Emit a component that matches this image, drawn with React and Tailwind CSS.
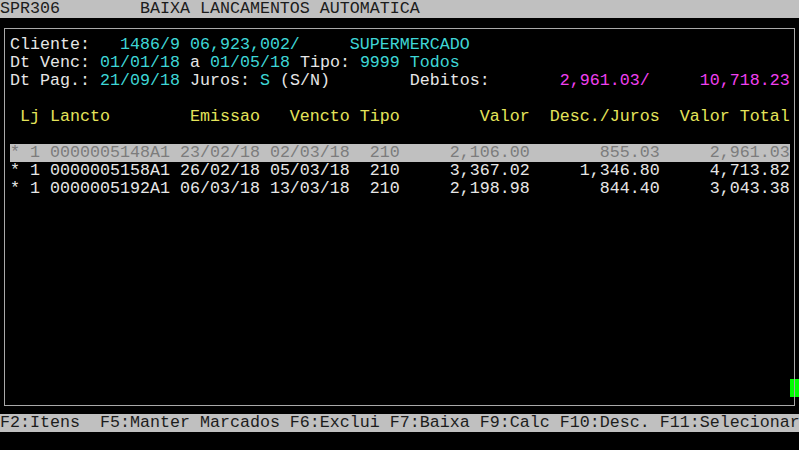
import React from 'react';

const W = 'text-[#e6e6e6]';
const C = 'text-[#3ed6d6]';
const Y = 'text-[#e4e45a]';
const M = 'text-[#f040f0]';

// each line is a list of [text, colour] pieces laid on an 80 x 24 character grid
const Line = ({ parts, className = '' }) => (
  <div className={`h-[18px] whitespace-pre ${className}`}>
    {parts.map(([t, c], i) => (
      <span key={i} className={c}>{t}</span>
    ))}
  </div>
);

const rows = [
  ['0000005148A1', '23/02/18', '02/03/18', '210', '2,106.00', '855.03', '2,961.03'],
  ['0000005158A1', '26/02/18', '05/03/18', '210', '3,367.02', '1,346.80', '4,713.82'],
  ['0000005192A1', '06/03/18', '13/03/18', '210', '2,198.98', '844.40', '3,043.38'],
];

const rowText = (r) =>
  `* 1 ${r[0]} ${r[1]} ${r[2]}  ${r[3]}     ${r[4].padStart(8)}     ${r[5].padStart(8)}     ${r[6].padStart(8)}`;

export default function App() {
  return (
    <div
      className="w-[799px] h-[450px] overflow-hidden bg-black text-[16.667px] leading-[18px]"
      style={{ fontFamily: '"Liberation Mono", "Courier New", monospace' }}
    >
      {/* barra de titulo */}
      <Line
        className="bg-[#c0c0c0] text-[#1c1c1c]"
        parts={[['SPR306        BAIXA LANCAMENTOS AUTOMATICA', '']]}
      />

      <div className="h-[396px] pt-[10px] pl-[4px]">
        <div className="relative w-[791px] h-[378px] border border-[#a9a9a9] pt-[7px] pl-[5px]">
          <Line
            parts={[
              ['Cliente:   ', W],
              ['1486/9 06,923,002/', C],
              ['     ', W],
              ['SUPERMERCADO', C],
            ]}
          />
          <Line
            parts={[
              ['Dt Venc: ', W],
              ['01/01/18', C],
              [' a ', W],
              ['01/05/18', C],
              [' Tipo: ', W],
              ['9999 Todos', C],
            ]}
          />
          <Line
            parts={[
              ['Dt Pag.: ', W],
              ['21/09/18', C],
              [' Juros: ', W],
              ['S', C],
              [' (S/N)        Debitos:       ', W],
              ['2,961.03/     10,718.23', M],
            ]}
          />
          <Line parts={[['', W]]} />
          <Line
            parts={[[' Lj Lancto        Emissao   Vencto Tipo        Valor  Desc./Juros  Valor Total', Y]]}
          />
          <Line parts={[['', W]]} />
          {rows.map((r, i) => (
            <Line
              key={i}
              className={i === 0 ? 'w-[780px] bg-[#c0c0c0] text-[#7c7c7c]' : W}
              parts={[[rowText(r), '']]}
            />
          ))}

          {/* cursor */}
          <div className="absolute right-[-5px] bottom-[8px] w-[9px] h-[18px] bg-[#00ff00]" />
          <div className="absolute right-[-1px] bottom-[8px] w-px h-[18px] bg-[#a9a9a9]" />
        </div>
      </div>

      {/* teclas de funcao */}
      <Line
        className="bg-[#c0c0c0] text-[#1c1c1c]"
        parts={[['F2:Itens  F5:Manter Marcados F6:Exclui F7:Baixa F9:Calc F10:Desc. F11:Selecionar', '']]}
      />
    </div>
  );
}
